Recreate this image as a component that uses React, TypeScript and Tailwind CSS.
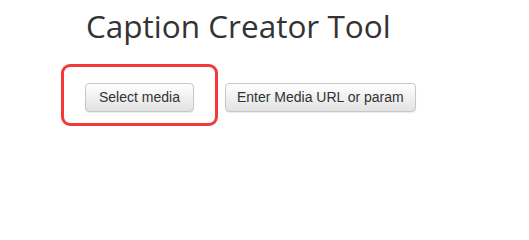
export default function App() {
  return (
    <div className="h-[216px] w-[529px] bg-white font-['Liberation_Sans',Arial,sans-serif]">
      {/* Title */}
      <h1 className="pl-[86px] pt-[7px] font-['Open_Sans',sans-serif] text-[31.5px] leading-[38px] font-normal text-[#333333]">
        Caption Creator Tool
      </h1>

      {/* Actions */}
      <div className="mt-[38px] flex items-start gap-[31px] pl-[85px]">
        <div className="relative">
          <button className="h-[29px] rounded-[4px] border border-[#c8c8c8] bg-gradient-to-b from-white to-[#e2e2e2] px-[13px] text-[14px] leading-[19px] text-[#333333] shadow-[0_1px_1px_rgba(0,0,0,0.08)]">
            Select media
          </button>
          {/* annotation */}
          <div className="pointer-events-none absolute -top-[19px] -right-[24px] -bottom-[14px] -left-[24px] rounded-[9px] border-[3px] border-[#f23a3a]" />
        </div>
        <button className="h-[29px] rounded-[4px] border border-[#c8c8c8] bg-gradient-to-b from-white to-[#e2e2e2] px-[11px] text-[14px] leading-[19px] text-[#333333] shadow-[0_1px_1px_rgba(0,0,0,0.08)]">
          Enter Media URL or param
        </button>
      </div>
    </div>
  );
}
